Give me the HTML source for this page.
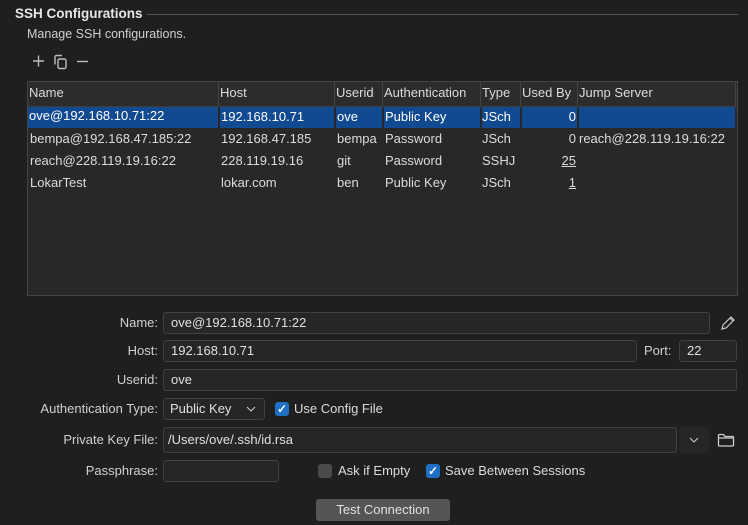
<!DOCTYPE html>
<html><head><meta charset="utf-8"><style>
*{box-sizing:border-box;margin:0;padding:0}
body{width:748px;height:525px;background:#1f1f1f;font-family:"Liberation Sans",sans-serif;font-size:13px;color:#dcdcdc;position:relative;overflow:hidden}
.a{position:absolute;white-space:nowrap}
.tb{position:absolute;left:27px;top:81px;width:711px;height:215px;background:#282828;border:1px solid #444}
.hd{position:absolute;left:0;top:0;height:25px;width:709px;background:#2c2c2c;border-bottom:1px solid #3c3c3c}
.c{position:absolute;line-height:22px}
.hc{position:absolute;top:0;height:24px;line-height:22px;border-right:1px solid #444;padding-left:1px}
.sel{position:absolute;left:0;top:25px;width:707px;height:21px;background:#124a91}
.in{position:absolute;background:#262626;border:1px solid #414141;border-radius:3px;line-height:20px;padding-left:7px;color:#e0e0e0}
.lb{position:absolute;right:590px;text-align:right;line-height:22px;color:#d0d0d0}
.cb{position:absolute;width:14px;height:14px;border-radius:3px;background:#1f6fc5;color:#fff;font-size:12px;line-height:14px;text-align:center;font-weight:bold}
</style></head><body>
<div class="a" style="left:15px;top:6px;font-weight:bold;color:#e6e6e6;font-size:13.5px">SSH Configurations</div>
<div class="a" style="left:147px;top:14px;width:591px;height:1px;background:#555"></div>
<div class="a" style="left:27px;top:27px;font-size:12.5px;color:#d0d0d0">Manage SSH configurations.</div>
<svg class="a" style="left:30px;top:53px" width="62" height="17" viewBox="0 0 62 17" fill="none" stroke="#bbb" stroke-width="1.4">
<path d="M3 8h11M8.5 2.5v11"/><rect x="28" y="6" width="8" height="9.5" rx="1.5"/><path d="M25 11.5V4a1.5 1.5 0 0 1 1.5-1.5H32"/><path d="M47 8.5h11"/></svg>
<div class="tb">
<div class="hd">
<div class="hc" style="left:0;width:191px">Name</div>
<div class="hc" style="left:191px;width:116px">Host</div>
<div class="hc" style="left:307px;width:48px">Userid</div>
<div class="hc" style="left:355px;width:98px">Authentication</div>
<div class="hc" style="left:453px;width:40px">Type</div>
<div class="hc" style="left:493px;width:57px">Used By</div>
<div class="hc" style="left:550px;width:158px">Jump Server</div>
</div>
<div class="sel"></div>
<div class="a" style="left:190px;top:25px;width:2px;height:21px;background:#282828"></div>
<div class="a" style="left:306px;top:25px;width:2px;height:21px;background:#282828"></div>
<div class="a" style="left:354px;top:25px;width:2px;height:21px;background:#282828"></div>
<div class="a" style="left:452px;top:25px;width:2px;height:21px;background:#282828"></div>
<div class="a" style="left:492px;top:25px;width:2px;height:21px;background:#282828"></div>
<div class="a" style="left:549px;top:25px;width:2px;height:21px;background:#282828"></div>
<div class="c" style="left:1px;top:23px;color:#fff">ove@192.168.10.71:22</div>
<div class="c" style="left:193px;top:24px;color:#fff">192.168.10.71</div>
<div class="c" style="left:309px;top:24px;color:#fff">ove</div>
<div class="c" style="left:357px;top:24px;color:#fff">Public Key</div>
<div class="c" style="left:454px;top:24px;color:#fff">JSch</div>
<div class="c" style="left:494px;top:24px;width:54px;text-align:right;color:#fff">0</div>
<div class="c" style="left:2px;top:46px">bempa@192.168.47.185:22</div>
<div class="c" style="left:193px;top:46px">192.168.47.185</div>
<div class="c" style="left:309px;top:46px">bempa</div>
<div class="c" style="left:357px;top:46px">Password</div>
<div class="c" style="left:454px;top:46px">JSch</div>
<div class="c" style="left:494px;top:46px;width:54px;text-align:right">0</div>
<div class="c" style="left:551px;top:46px">reach@228.119.19.16:22</div>
<div class="c" style="left:2px;top:68px">reach@228.119.19.16:22</div>
<div class="c" style="left:193px;top:68px">228.119.19.16</div>
<div class="c" style="left:309px;top:68px">git</div>
<div class="c" style="left:357px;top:68px">Password</div>
<div class="c" style="left:454px;top:68px">SSHJ</div>
<div class="c" style="left:494px;top:68px;width:54px;text-align:right;text-decoration:underline">25</div>
<div class="c" style="left:2px;top:90px">LokarTest</div>
<div class="c" style="left:193px;top:90px">lokar.com</div>
<div class="c" style="left:309px;top:90px">ben</div>
<div class="c" style="left:357px;top:90px">Public Key</div>
<div class="c" style="left:454px;top:90px">JSch</div>
<div class="c" style="left:494px;top:90px;width:54px;text-align:right;text-decoration:underline">1</div>
</div>
<div class="lb" style="top:312px">Name:</div>
<div class="in" style="left:163px;top:312px;width:547px;height:22px">ove@192.168.10.71:22</div>
<svg class="a" style="left:719px;top:314px" width="16" height="18" viewBox="0 0 16 18" fill="none" stroke="#ccc" stroke-width="1.2"><path d="M3 15l1-4 8-8 3 3-8 8z M11 4l3 3"/></svg>
<div class="lb" style="top:340px">Host:</div>
<div class="in" style="left:163px;top:340px;width:474px;height:22px">192.168.10.71</div>
<div class="a" style="left:644px;top:340px;line-height:22px;color:#d0d0d0">Port:</div>
<div class="in" style="left:679px;top:340px;width:58px;height:22px">22</div>
<div class="lb" style="top:369px">Userid:</div>
<div class="in" style="left:163px;top:369px;width:574px;height:22px">ove</div>
<div class="lb" style="top:398px">Authentication Type:</div>
<div class="in" style="left:163px;top:398px;width:102px;height:22px;padding-left:6px">Public Key</div>
<svg class="a" style="left:246px;top:405px" width="10" height="8"><path d="M1 2l4 4 4-4" stroke="#ccc" fill="none" stroke-width="1.1"/></svg>
<div class="cb" style="left:275px;top:402px">✓</div>
<div class="a" style="left:294px;top:398px;line-height:22px">Use Config File</div>
<div class="lb" style="top:429px">Private Key File:</div>
<div class="in" style="left:163px;top:427px;width:514px;height:26px;line-height:24px;padding-left:4px">/Users/ove/.ssh/id.rsa</div>
<div class="a" style="left:679px;top:427px;width:30px;height:26px;background:#262626;border-radius:3px"></div>
<svg class="a" style="left:689px;top:436px" width="10" height="8"><path d="M1 2l4 4 4-4" stroke="#ccc" fill="none" stroke-width="1.1"/></svg>
<svg class="a" style="left:717px;top:432px" width="18" height="16" viewBox="0 0 18 16" fill="none" stroke="#ccc" stroke-width="1.3"><path d="M1.5 3.5a1 1 0 0 1 1-1h4l1.5 2h7.5a1 1 0 0 1 1 1v7.5a1 1 0 0 1-1 1h-13a1 1 0 0 1-1-1z M1.5 6h15"/></svg>
<div class="lb" style="top:460px">Passphrase:</div>
<div class="in" style="left:163px;top:460px;width:116px;height:22px"></div>
<div class="a" style="left:318px;top:464px;width:14px;height:14px;border-radius:3px;background:#4a4a4a"></div>
<div class="a" style="left:338px;top:460px;line-height:22px">Ask if Empty</div>
<div class="cb" style="left:426px;top:464px">✓</div>
<div class="a" style="left:445px;top:460px;line-height:22px">Save Between Sessions</div>
<div class="a" style="left:316px;top:499px;width:134px;height:22px;background:#555;border-radius:3px;text-align:center;line-height:22px;color:#e0e0e0">Test Connection</div>
</body></html>
